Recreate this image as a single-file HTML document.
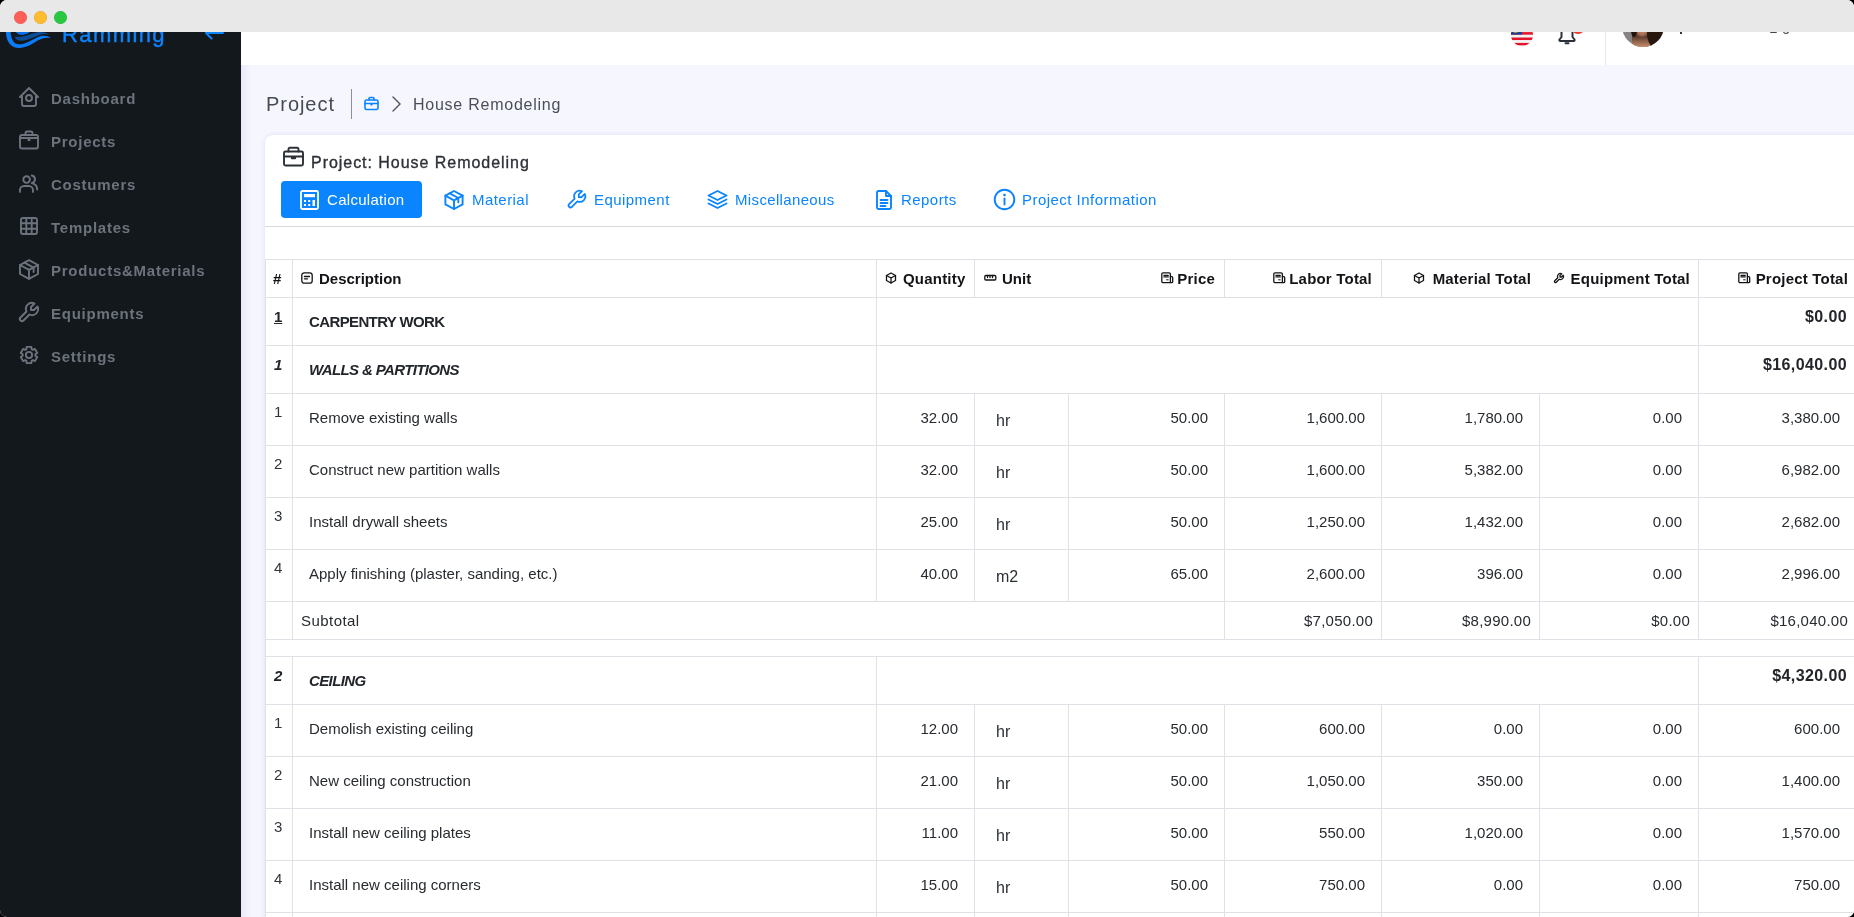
<!DOCTYPE html>
<html><head><meta charset="utf-8">
<style>
*{box-sizing:border-box;margin:0;padding:0}
html,body{width:1854px;height:917px;overflow:hidden;background:#000;font-family:"Liberation Sans",sans-serif}
#win{position:absolute;left:0;top:0;width:1854px;height:917px;border-radius:7px;overflow:hidden;background:#f6f6fe}
#titlebar{position:absolute;left:0;top:0;width:1854px;height:32px;background:#e8e8e8}
.dot{position:absolute;top:10.6px;width:13px;height:13px;border-radius:50%;box-shadow:inset 0 0 0 0.6px rgba(0,0,0,0.12)}
#side{position:absolute;left:0;top:32px;width:241px;height:885px;background:#13181c;overflow:hidden}
#topbar{position:absolute;left:241px;top:32px;width:1613px;height:33px;background:#fff}
.ic{position:absolute;overflow:visible}
.t{position:absolute;white-space:nowrap;line-height:1}
#win{will-change:transform}
.nv{position:absolute;left:51px;font-size:15px;font-weight:bold;color:#6c737d;letter-spacing:0.75px;line-height:1}
.hl{position:absolute;height:1px;background:#dfe1e6}
.vl{position:absolute;width:1px;background:#dfe1e6}
.num{font-size:15px;color:#3a3f45}
.th{font-size:15px;font-weight:bold;color:#121417}
.tab{font-size:15px;color:#0a84ff;letter-spacing:0.4px}
</style></head>
<body>
<div id="win">
 <div id="titlebar">
  <div class="dot" style="left:13.8px;background:#ff5f57"></div>
  <div class="dot" style="left:33.8px;background:#febc2e"></div>
  <div class="dot" style="left:53.8px;background:#28c840"></div>
 </div>

<div id="side">
<svg class="ic" style="left:0;top:-32px;width:60px;height:60px" viewBox="0 0 60 60"><path d="M5.8 30 C5.8 42 11 47.9 19 47.9 C27 47.9 33 43.3 38 40.3 C43 37.7 47 37.4 51 37.9 C47 35.3 42 35.2 37 37.5 C31 40.5 25 44.3 19 44.3 C13.5 44.3 10.6 39 10.6 30 Z" fill="#0b7cf7"/><path d="M15 30.5 C17 35.5 23 36.3 29 32.8 L30 30.5 Z" fill="#0a6fe8"/><path d="M14.8 36.8 C15.5 40.5 21 41.8 27 39.8 C33 37.8 38 35.2 42 34.2 C45 33.6 47.5 34 49.5 35.2 C46 32.3 41 31.3 36 32.5 C30 34 25 36.8 20 36.8 C17.5 36.8 16 36.6 14.8 36.8Z" fill="#0a4d96"/></svg>
<div class="t" style="left:62px;top:-8px;font-size:22px;color:#0a84ff;letter-spacing:1.4px;-webkit-text-stroke:0.4px #0a84ff">Ramming</div>
<svg class="ic" style="left:204px;top:-4px;width:22px;height:14px" viewBox="0 0 22 14" stroke="#0a84ff" stroke-width="2" fill="none" stroke-linecap="round" stroke-linejoin="round"><path d="M2 5H19M2 5L7.5 0M2 5L7.5 10.5"/></svg>
<svg class="ic" style="left:17px;top:53px;width:24px;height:24px" viewBox="0 0 24 24" fill="none" stroke="#6c737d" stroke-width="1.9" stroke-linecap="round" stroke-linejoin="round"><path d="M5 12H3l9-9 9 9h-2"/><path d="M5 12v7a2 2 0 0 0 2 2h10a2 2 0 0 0 2-2v-7"/><circle cx="12" cy="13" r="3"/></svg>
<div class="nv" style="top:59px">Dashboard</div>
<svg class="ic" style="left:17px;top:96px;width:24px;height:24px" viewBox="0 0 24 24" fill="none" stroke="#6c737d" stroke-width="1.9" stroke-linecap="round" stroke-linejoin="round"><rect x="3" y="7" width="18" height="13.5" rx="2"/><path d="M8.5 7V5a1.5 1.5 0 0 1 1.5-1.5h4A1.5 1.5 0 0 1 15.5 5v2"/><path d="M3 10h18"/><rect x="10.6" y="10.5" width="2.8" height="2.6" fill="#6c737d" stroke="none"/></svg>
<div class="nv" style="top:102px">Projects</div>
<svg class="ic" style="left:17px;top:139px;width:24px;height:24px" viewBox="0 0 24 24" fill="none" stroke="#6c737d" stroke-width="1.9" stroke-linecap="round" stroke-linejoin="round"><circle cx="9.6" cy="8.6" r="3.3"/><path d="M2.9 20.9v-1.7a4.2 4.2 0 0 1 4.2-4.2h4.7a4.2 4.2 0 0 1 4.2 4.2v1.7"/><path d="M14.7 4.5a3.9 3.9 0 0 1 0 7.7c3.2 .8 5.5 3.2 5.5 6.4"/></svg>
<div class="nv" style="top:145px">Costumers</div>
<svg class="ic" style="left:17px;top:182px;width:24px;height:24px" viewBox="0 0 24 24" fill="none" stroke="#6c737d" stroke-width="1.9" stroke-linecap="round" stroke-linejoin="round"><rect x="4" y="4" width="16" height="16" rx="2"/><path d="M4 9.3h16M4 14.7h16M9.3 4v16M14.7 4v16"/></svg>
<div class="nv" style="top:188px">Templates</div>
<svg class="ic" style="left:17px;top:225px;width:24px;height:24px" viewBox="0 0 24 24" fill="none" stroke="#6c737d" stroke-width="1.9" stroke-linecap="round" stroke-linejoin="round"><path d="M12 3.2l9 4.8v9L12 21.8 3 17V8z"/><path d="M3 8l9 4.9 9-4.9M12 12.9v8.9"/><path d="M7.4 5.6l9.2 5v4.4"/></svg>
<div class="nv" style="top:231px">Products&amp;Materials</div>
<svg class="ic" style="left:17px;top:268px;width:24px;height:24px" viewBox="0 0 24 24" fill="none" stroke="#6c737d" stroke-width="1.9" stroke-linecap="round" stroke-linejoin="round"><g transform="translate(24 0) scale(-1 1)"><path d="M7 10h3v-3l-3.5-3.5a6 6 0 0 1 8 8l6 6a2 2 0 0 1-3 3l-6-6a6 6 0 0 1-8-8l3.5 3.5"/></g></svg>
<div class="nv" style="top:274px">Equipments</div>
<svg class="ic" style="left:17px;top:311px;width:24px;height:24px" viewBox="0 0 24 24" fill="none" stroke="#6c737d" stroke-width="1.9" stroke-linecap="round" stroke-linejoin="round"><path d="M9.40 6.15 L9.66 3.83 L14.34 3.83 L14.60 6.15 L15.76 6.82 L17.90 5.89 L20.25 9.94 L18.36 11.33 L18.36 12.67 L20.25 14.06 L17.90 18.11 L15.76 17.18 L14.60 17.85 L14.34 20.17 L9.66 20.17 L9.40 17.85 L8.24 17.18 L6.10 18.11 L3.75 14.06 L5.64 12.67 L5.64 11.33 L3.75 9.94 L6.10 5.89 L8.24 6.82Z"/><circle cx="12" cy="12" r="3.1"/></svg>
<div class="nv" style="top:317px">Settings</div>
</div>
<div style="position:absolute;left:241px;top:32px;width:10px;height:885px;background:linear-gradient(90deg,rgba(120,110,220,0.10),rgba(120,110,220,0))"></div>
<div id="topbar"></div>
<svg class="ic" style="left:1511px;top:24px;width:22px;height:22px" viewBox="0 0 22 22"><defs><clipPath id="fc"><circle cx="11" cy="11" r="11"/></clipPath></defs><g clip-path="url(#fc)"><rect x="0" y="0.00" width="22" height="2.75" fill="#f2f2f2"/><rect x="0" y="2.70" width="22" height="2.75" fill="#e3152b"/><rect x="0" y="5.40" width="22" height="2.75" fill="#f2f2f2"/><rect x="0" y="8.10" width="22" height="2.75" fill="#e3152b"/><rect x="0" y="10.80" width="22" height="2.75" fill="#f2f2f2"/><rect x="0" y="13.50" width="22" height="2.75" fill="#e3152b"/><rect x="0" y="16.20" width="22" height="2.75" fill="#f2f2f2"/><rect x="0" y="18.90" width="22" height="2.75" fill="#e3152b"/><rect x="0" y="21.60" width="22" height="2.75" fill="#f2f2f2"/><rect x="0" y="0" width="11" height="10.6" fill="#1d3e9a"/><circle cx="5" cy="6" r="3" fill="#f6c915"/><circle cx="6" cy="6" r="2.6" fill="#1d3e9a"/></g></svg>
<svg class="ic" style="left:1556px;top:20px;width:22px;height:26px" viewBox="0 0 22 26" fill="none" stroke="#2b3036" stroke-width="2" stroke-linecap="round" stroke-linejoin="round"><path d="M5.5 11v6L3.5 19.5a1 1 0 0 0 .8 1.5h13.4a1 1 0 0 0 .8-1.5L16.5 17v-6a5.5 5.5 0 0 0-11 0z"/><path d="M9.5 23.2h3"/></svg>
<div style="position:absolute;left:1571px;top:20px;width:14px;height:14px;border-radius:50%;background:#f23b2c"></div>
<div class="vl" style="left:1605px;top:32px;height:33px;background:#e6e6ea"></div>
<div style="position:absolute;left:1622px;top:5px;width:42px;height:42px;border-radius:50%;overflow:hidden;background:#858483"><div style="position:absolute;left:10px;top:22px;width:20px;height:22px;background:linear-gradient(180deg,#3a271d 0,#5e3f2f 45%,#b07a5c 80%,#d79c7e 100%);border-radius:30% 30% 0 0"></div><div style="position:absolute;left:13px;top:18px;width:14px;height:14px;background:radial-gradient(ellipse at 50% 45%,#d19478 0,#a86f52 50%,#2a1a12 100%);border-radius:50%"></div><div style="position:absolute;left:25px;top:16px;width:22px;height:30px;background:#26180f;border-radius:40% 20% 20% 60%"></div><div style="position:absolute;left:9px;top:18px;width:6px;height:14px;background:#1f140e;border-radius:50%"></div></div>
<div style="position:absolute;left:1680px;top:31px;width:2px;height:3px;background:#333"></div>
<div style="position:absolute;left:1770px;top:31px;width:7px;height:2px;background:#444;border-radius:1px"></div>
<div style="position:absolute;left:1783px;top:29px;width:6px;height:5px;border:1.5px solid #444;border-top:none;border-radius:0 0 3px 3px"></div>
<div style="position:absolute;left:1400px;top:0;width:454px;height:32px;background:#e8e8e8;border-radius:0 7px 0 0"></div>
<div style="position:absolute;left:0;top:0;width:241px;height:32px;background:#e8e8e8;border-radius:7px 0 0 0"></div>
<div class="dot" style="left:13.8px;background:#ff5f57"></div>
  <div class="dot" style="left:33.8px;background:#febc2e"></div>
  <div class="dot" style="left:53.8px;background:#28c840"></div>
<div class="t" style="left:266px;top:94px;font-size:20px;color:#464b52;letter-spacing:0.95px">Project</div>
<div class="vl" style="left:351px;top:89px;height:30px;background:#8d9196"></div>
<svg class="ic" style="left:364px;top:96px;width:15px;height:15px" viewBox="0 0 15 15" fill="none" stroke="#0a84ff" stroke-width="1.6" stroke-linecap="round" stroke-linejoin="round"><rect x="1" y="4" width="13" height="9.5" rx="1.5"/><path d="M5 4V2.5a1 1 0 0 1 1-1h3a1 1 0 0 1 1 1V4"/><path d="M1 7.5h13"/><path d="M7 8.8h1"/></svg>
<svg class="ic" style="left:390px;top:95px;width:12px;height:18px" viewBox="0 0 12 18" fill="none" stroke="#4f545a" stroke-width="1.4" stroke-linecap="round"><path d="M3 2l7 7-7 7"/></svg>
<div class="t" style="left:413px;top:97px;font-size:16px;color:#4a4f56;letter-spacing:0.75px">House Remodeling</div>
<div style="position:absolute;left:265px;top:135px;width:1620px;height:800px;background:#fff;border-radius:8px 0 0 0;box-shadow:0 0 4px rgba(95,85,235,0.16)"></div>
<svg class="ic" style="left:282px;top:146px;width:23px;height:22px" viewBox="0 0 23 22" fill="none" stroke="#2b3036" stroke-width="1.9" stroke-linecap="round" stroke-linejoin="round"><rect x="2" y="5.5" width="19" height="14" rx="1.5"/><path d="M6.5 5.5V3a1.3 1.3 0 0 1 1.3-1.3h7.4A1.3 1.3 0 0 1 16.5 3v2.5"/><path d="M2 10.5h19"/><path d="M10 12h3" stroke-width="2.4"/></svg>
<div class="t" style="left:311px;top:155px;font-size:16px;color:#2d3238;letter-spacing:0.96px;-webkit-text-stroke:0.35px #2d3238">Project: House Remodeling</div>
<div style="position:absolute;left:281px;top:181px;width:141px;height:37px;background:#0a84ff;border-radius:4px"></div>
<svg class="ic" style="left:300px;top:190px;width:19px;height:20px" viewBox="0 0 19 20" fill="none" stroke="#fff" stroke-width="1.8"><rect x="1" y="1" width="17" height="18" rx="1.5"/><rect x="4" y="4" width="11" height="3.2" fill="#fff" stroke="none"/><rect x="4" y="10" width="2" height="2" fill="#fff" stroke="none"/><rect x="8.2" y="10" width="2" height="2" fill="#fff" stroke="none"/><rect x="4" y="14" width="2" height="2" fill="#fff" stroke="none"/><rect x="8.2" y="14" width="2" height="2" fill="#fff" stroke="none"/><rect x="12.5" y="10" width="2.5" height="6" fill="#fff" stroke="none"/></svg>
<div class="t" style="left:327px;top:192px;font-size:15px;color:#fff;letter-spacing:0.3px">Calculation</div>
<svg class="ic" style="left:443px;top:189px;width:22px;height:22px" viewBox="0 0 22 22" fill="none" stroke="#0a84ff" stroke-width="1.9" stroke-linecap="round" stroke-linejoin="round"><path d="M11 2l8.6 4.6v8.8L11 20l-8.6-4.6V6.6z"/><path d="M2.4 6.6l8.6 4.7 8.6-4.7M11 11.3V20"/><path d="M6.7 4.3l8.6 4.7v4.2"/></svg>
<div class="t" style="left:472px;top:192px;font-size:15px;color:#0a84ff;letter-spacing:0.45px">Material</div>
<svg class="ic" style="left:566px;top:188px;width:22px;height:23px" viewBox="0 0 22 23" fill="none" stroke="#0a84ff" stroke-width="1.9" stroke-linecap="round" stroke-linejoin="round"><g transform="translate(22 0) scale(-1 1) scale(.92)"><path d="M7 10h3v-3l-3.5-3.5a6 6 0 0 1 8 8l6 6a2 2 0 0 1-3 3l-6-6a6 6 0 0 1-8-8l3.5 3.5"/></g></svg>
<div class="t" style="left:594px;top:192px;font-size:15px;color:#0a84ff;letter-spacing:0.45px">Equipment</div>
<svg class="ic" style="left:706px;top:189px;width:23px;height:22px" viewBox="0 0 23 22" fill="none" stroke="#0a84ff" stroke-width="1.9" stroke-linecap="round" stroke-linejoin="round"><path d="M11.5 2l9 4.5-9 4.5-9-4.5z"/><path d="M2.5 10.5l9 4.5 9-4.5"/><path d="M2.5 14.5l9 4.5 9-4.5"/></svg>
<div class="t" style="left:735px;top:192px;font-size:15px;color:#0a84ff;letter-spacing:0.35px">Miscellaneous</div>
<svg class="ic" style="left:874px;top:189px;width:20px;height:22px" viewBox="0 0 20 22" fill="none" stroke="#0a84ff" stroke-width="1.9" stroke-linecap="round" stroke-linejoin="round"><path d="M12 2H4.5A1.5 1.5 0 0 0 3 3.5v15A1.5 1.5 0 0 0 4.5 20h11a1.5 1.5 0 0 0 1.5-1.5V7z"/><path d="M12 2v5h5"/><path d="M6.5 11h7M6.5 14h7M6.5 17h5"/></svg>
<div class="t" style="left:901px;top:192px;font-size:15px;color:#0a84ff;letter-spacing:0.45px">Reports</div>
<svg class="ic" style="left:993px;top:188px;width:23px;height:23px" viewBox="0 0 23 23" fill="none" stroke="#0a84ff" stroke-width="1.9" stroke-linecap="round" stroke-linejoin="round"><circle cx="11.5" cy="11.5" r="9.8"/><path d="M11.5 10.5v6"/><path d="M11.5 7h.01" stroke-width="2.6"/></svg>
<div class="t" style="left:1022px;top:192px;font-size:15px;color:#0a84ff;letter-spacing:0.47px">Project Information</div>
<div class="hl" style="left:265px;top:226px;width:1589px;background:#d9d9dd"></div>
<div class="hl" style="left:265px;top:259px;width:1589px"></div>
<div class="hl" style="left:265px;top:297px;width:1589px"></div>
<div class="hl" style="left:265px;top:345px;width:1589px"></div>
<div class="hl" style="left:265px;top:393px;width:1589px"></div>
<div class="hl" style="left:265px;top:445px;width:1589px"></div>
<div class="hl" style="left:265px;top:497px;width:1589px"></div>
<div class="hl" style="left:265px;top:549px;width:1589px"></div>
<div class="hl" style="left:265px;top:601px;width:1589px"></div>
<div class="hl" style="left:265px;top:639px;width:1589px"></div>
<div class="hl" style="left:265px;top:656px;width:1589px"></div>
<div class="hl" style="left:265px;top:704px;width:1589px"></div>
<div class="hl" style="left:265px;top:756px;width:1589px"></div>
<div class="hl" style="left:265px;top:808px;width:1589px"></div>
<div class="hl" style="left:265px;top:860px;width:1589px"></div>
<div class="hl" style="left:265px;top:912px;width:1589px"></div>
<div class="vl" style="left:265px;top:259px;height:658px"></div>
<div class="vl" style="left:292px;top:259px;height:38px"></div>
<div class="vl" style="left:876px;top:259px;height:38px"></div>
<div class="vl" style="left:974px;top:259px;height:38px"></div>
<div class="vl" style="left:1224px;top:259px;height:38px"></div>
<div class="vl" style="left:1381px;top:259px;height:38px"></div>
<div class="vl" style="left:1698px;top:259px;height:38px"></div>
<div class="vl" style="left:292px;top:297px;height:48px"></div>
<div class="vl" style="left:876px;top:297px;height:48px"></div>
<div class="vl" style="left:1698px;top:297px;height:48px"></div>
<div class="vl" style="left:292px;top:345px;height:48px"></div>
<div class="vl" style="left:876px;top:345px;height:48px"></div>
<div class="vl" style="left:1698px;top:345px;height:48px"></div>
<div class="vl" style="left:292px;top:656px;height:48px"></div>
<div class="vl" style="left:876px;top:656px;height:48px"></div>
<div class="vl" style="left:1698px;top:656px;height:48px"></div>
<div class="vl" style="left:292px;top:393px;height:208px"></div>
<div class="vl" style="left:876px;top:393px;height:208px"></div>
<div class="vl" style="left:974px;top:393px;height:208px"></div>
<div class="vl" style="left:1068px;top:393px;height:208px"></div>
<div class="vl" style="left:1224px;top:393px;height:208px"></div>
<div class="vl" style="left:1381px;top:393px;height:208px"></div>
<div class="vl" style="left:1539px;top:393px;height:208px"></div>
<div class="vl" style="left:1698px;top:393px;height:208px"></div>
<div class="vl" style="left:292px;top:704px;height:213px"></div>
<div class="vl" style="left:876px;top:704px;height:213px"></div>
<div class="vl" style="left:974px;top:704px;height:213px"></div>
<div class="vl" style="left:1068px;top:704px;height:213px"></div>
<div class="vl" style="left:1224px;top:704px;height:213px"></div>
<div class="vl" style="left:1381px;top:704px;height:213px"></div>
<div class="vl" style="left:1539px;top:704px;height:213px"></div>
<div class="vl" style="left:1698px;top:704px;height:213px"></div>
<div class="vl" style="left:292px;top:601px;height:38px"></div>
<div class="vl" style="left:1224px;top:601px;height:38px"></div>
<div class="vl" style="left:1381px;top:601px;height:38px"></div>
<div class="vl" style="left:1539px;top:601px;height:38px"></div>
<div class="vl" style="left:1698px;top:601px;height:38px"></div>
<div class="t" style="left:273px;top:271px;font-size:15px;font-weight:bold;color:#121417">#</div>
<svg class="ic" style="left:301px;top:272px;width:12px;height:12px" viewBox="0 0 12 12" fill="none" stroke="#121417" stroke-width="1.3" stroke-linecap="round" stroke-linejoin="round"><rect x="0.8" y="0.8" width="10.4" height="10.4" rx="2.5"/><path d="M3.5 4.5h5M3.5 6.8h3"/></svg>
<div class="t" style="left:319px;top:271px;font-size:15px;font-weight:bold;color:#121417">Description</div>
<svg class="ic" style="left:885px;top:272px;width:12px;height:12px" viewBox="0 0 12 12" fill="none" stroke="#121417" stroke-width="1.3" stroke-linecap="round" stroke-linejoin="round"><path d="M6 1l4.5 2.5v5L6 11 1.5 8.5v-5z"/><path d="M6 6l4.5-2.5M6 6v5M6 6L1.5 3.5"/></svg>
<div class="t" style="left:903px;top:271px;font-size:15px;font-weight:bold;color:#121417;letter-spacing:0.2px">Quantity</div>
<svg class="ic" style="left:984px;top:272px;width:13px;height:12px" viewBox="0 0 13 12" fill="none" stroke="#121417" stroke-width="1.3" stroke-linecap="round" stroke-linejoin="round"><rect x="0.8" y="3.5" width="11" height="4.5" rx="1"/><path d="M3.5 3.5v2M6 3.5v2M8.5 3.5v2"/></svg>
<div class="t" style="left:1002px;top:271px;font-size:15px;font-weight:bold;color:#121417">Unit</div>
<svg class="ic" style="left:1161px;top:272px;width:13px;height:12px" viewBox="0 0 13 12" fill="none" stroke="#121417" stroke-width="1.3" stroke-linecap="round" stroke-linejoin="round"><rect x="0.8" y="0.9" width="8.6" height="9.8" rx="1.2"/><path d="M9.4 4.6h1.4a.9.9 0 0 1 .9.9v4.3a.9.9 0 0 1-.9.9H9.4"/><path d="M2.9 3.3h4.4M2.9 4.9h4.4" stroke-width="1.2"/><path d="M5.6 7.8h1.6" stroke-width="1"/></svg>
<div class="t" style="right:639px;top:271px;font-size:15px;font-weight:bold;color:#121417;letter-spacing:0.2px">Price</div>
<div class="t" style="right:482px;top:271px;font-size:15px;font-weight:bold;color:#121417;letter-spacing:0.2px">Labor Total</div>
<div class="t" style="right:323px;top:271px;font-size:15px;font-weight:bold;color:#121417;letter-spacing:0.2px">Material Total</div>
<div class="t" style="right:164px;top:271px;font-size:15px;font-weight:bold;color:#121417;letter-spacing:0.2px">Equipment Total</div>
<div class="t" style="right:6px;top:271px;font-size:15px;font-weight:bold;color:#121417;letter-spacing:0.2px">Project Total</div>
<svg class="ic" style="left:1273px;top:272px;width:13px;height:12px" viewBox="0 0 13 12" fill="none" stroke="#121417" stroke-width="1.3" stroke-linecap="round" stroke-linejoin="round"><rect x="0.8" y="0.9" width="8.6" height="9.8" rx="1.2"/><path d="M9.4 4.6h1.4a.9.9 0 0 1 .9.9v4.3a.9.9 0 0 1-.9.9H9.4"/><path d="M2.9 3.3h4.4M2.9 4.9h4.4" stroke-width="1.2"/><path d="M5.6 7.8h1.6" stroke-width="1"/></svg>
<svg class="ic" style="left:1413px;top:272px;width:12px;height:12px" viewBox="0 0 12 12" fill="none" stroke="#121417" stroke-width="1.3" stroke-linecap="round" stroke-linejoin="round"><path d="M6 1l4.5 2.5v5L6 11 1.5 8.5v-5z"/><path d="M6 6l4.5-2.5M6 6v5M6 6L1.5 3.5"/></svg>
<svg class="ic" style="left:1553px;top:272px;width:12px;height:12px" viewBox="0 0 12 12" fill="none" stroke="#121417" stroke-width="1.3" stroke-linecap="round" stroke-linejoin="round"><g transform="translate(12 0) scale(-1 1) scale(.5)"><path d="M7 10h3v-3l-3.5-3.5a6 6 0 0 1 8 8l6 6a2 2 0 0 1-3 3l-6-6a6 6 0 0 1-8-8l3.5 3.5" stroke-width="2.6"/></g></svg>
<svg class="ic" style="left:1738px;top:272px;width:13px;height:12px" viewBox="0 0 13 12" fill="none" stroke="#121417" stroke-width="1.3" stroke-linecap="round" stroke-linejoin="round"><rect x="0.8" y="0.9" width="8.6" height="9.8" rx="1.2"/><path d="M9.4 4.6h1.4a.9.9 0 0 1 .9.9v4.3a.9.9 0 0 1-.9.9H9.4"/><path d="M2.9 3.3h4.4M2.9 4.9h4.4" stroke-width="1.2"/><path d="M5.6 7.8h1.6" stroke-width="1"/></svg>
<div class="t" style="left:274px;top:309px;font-size:15px;font-weight:bold;color:#22262b;text-decoration:underline;">1</div>
<div class="t" style="left:309px;top:314px;font-size:15px;font-weight:bold;color:#22262b;letter-spacing:-0.62px;">CARPENTRY WORK</div>
<div class="t" style="right:7px;top:309px;font-size:16px;font-weight:bold;color:#22262b;letter-spacing:0.4px">$0.00</div>
<div class="t" style="left:274px;top:357px;font-size:15px;font-weight:bold;color:#22262b;font-style:italic;">1</div>
<div class="t" style="left:309px;top:362px;font-size:15px;font-weight:bold;color:#22262b;letter-spacing:-0.62px;font-style:italic;">WALLS &amp; PARTITIONS</div>
<div class="t" style="right:7px;top:357px;font-size:16px;font-weight:bold;color:#22262b;letter-spacing:0.4px">$16,040.00</div>
<div class="t" style="left:274px;top:668px;font-size:15px;font-weight:bold;color:#22262b;font-style:italic;">2</div>
<div class="t" style="left:309px;top:673px;font-size:15px;font-weight:bold;color:#22262b;letter-spacing:-0.62px;font-style:italic;">CEILING</div>
<div class="t" style="right:7px;top:668px;font-size:16px;font-weight:bold;color:#22262b;letter-spacing:0.4px">$4,320.00</div>
<div class="t" style="left:274px;top:404px;font-size:15px;color:#30353a">1</div>
<div class="t" style="left:309px;top:410px;font-size:15px;color:#272b30">Remove existing walls</div>
<div class="t" style="right:896px;top:410px;font-size:15px;color:#272b30">32.00</div>
<div class="t" style="left:996px;top:413px;font-size:16px;color:#2b3035">hr</div>
<div class="t" style="right:646px;top:410px;font-size:15px;color:#272b30">50.00</div>
<div class="t" style="right:489px;top:410px;font-size:15px;color:#272b30">1,600.00</div>
<div class="t" style="right:331px;top:410px;font-size:15px;color:#272b30">1,780.00</div>
<div class="t" style="right:172px;top:410px;font-size:15px;color:#272b30">0.00</div>
<div class="t" style="right:14px;top:410px;font-size:15px;color:#272b30">3,380.00</div>
<div class="t" style="left:274px;top:456px;font-size:15px;color:#30353a">2</div>
<div class="t" style="left:309px;top:462px;font-size:15px;color:#272b30">Construct new partition walls</div>
<div class="t" style="right:896px;top:462px;font-size:15px;color:#272b30">32.00</div>
<div class="t" style="left:996px;top:465px;font-size:16px;color:#2b3035">hr</div>
<div class="t" style="right:646px;top:462px;font-size:15px;color:#272b30">50.00</div>
<div class="t" style="right:489px;top:462px;font-size:15px;color:#272b30">1,600.00</div>
<div class="t" style="right:331px;top:462px;font-size:15px;color:#272b30">5,382.00</div>
<div class="t" style="right:172px;top:462px;font-size:15px;color:#272b30">0.00</div>
<div class="t" style="right:14px;top:462px;font-size:15px;color:#272b30">6,982.00</div>
<div class="t" style="left:274px;top:508px;font-size:15px;color:#30353a">3</div>
<div class="t" style="left:309px;top:514px;font-size:15px;color:#272b30">Install drywall sheets</div>
<div class="t" style="right:896px;top:514px;font-size:15px;color:#272b30">25.00</div>
<div class="t" style="left:996px;top:517px;font-size:16px;color:#2b3035">hr</div>
<div class="t" style="right:646px;top:514px;font-size:15px;color:#272b30">50.00</div>
<div class="t" style="right:489px;top:514px;font-size:15px;color:#272b30">1,250.00</div>
<div class="t" style="right:331px;top:514px;font-size:15px;color:#272b30">1,432.00</div>
<div class="t" style="right:172px;top:514px;font-size:15px;color:#272b30">0.00</div>
<div class="t" style="right:14px;top:514px;font-size:15px;color:#272b30">2,682.00</div>
<div class="t" style="left:274px;top:560px;font-size:15px;color:#30353a">4</div>
<div class="t" style="left:309px;top:566px;font-size:15px;color:#272b30">Apply finishing (plaster, sanding, etc.)</div>
<div class="t" style="right:896px;top:566px;font-size:15px;color:#272b30">40.00</div>
<div class="t" style="left:996px;top:569px;font-size:16px;color:#2b3035">m2</div>
<div class="t" style="right:646px;top:566px;font-size:15px;color:#272b30">65.00</div>
<div class="t" style="right:489px;top:566px;font-size:15px;color:#272b30">2,600.00</div>
<div class="t" style="right:331px;top:566px;font-size:15px;color:#272b30">396.00</div>
<div class="t" style="right:172px;top:566px;font-size:15px;color:#272b30">0.00</div>
<div class="t" style="right:14px;top:566px;font-size:15px;color:#272b30">2,996.00</div>
<div class="t" style="left:301px;top:613px;font-size:15px;color:#272b30;letter-spacing:0.45px">Subtotal</div>
<div class="t" style="right:481px;top:613px;font-size:15px;color:#272b30;letter-spacing:0.25px">$7,050.00</div>
<div class="t" style="right:323px;top:613px;font-size:15px;color:#272b30;letter-spacing:0.25px">$8,990.00</div>
<div class="t" style="right:164px;top:613px;font-size:15px;color:#272b30;letter-spacing:0.25px">$0.00</div>
<div class="t" style="right:6px;top:613px;font-size:15px;color:#272b30;letter-spacing:0.25px">$16,040.00</div>
<div class="t" style="left:274px;top:715px;font-size:15px;color:#30353a">1</div>
<div class="t" style="left:309px;top:721px;font-size:15px;color:#272b30">Demolish existing ceiling</div>
<div class="t" style="right:896px;top:721px;font-size:15px;color:#272b30">12.00</div>
<div class="t" style="left:996px;top:724px;font-size:16px;color:#2b3035">hr</div>
<div class="t" style="right:646px;top:721px;font-size:15px;color:#272b30">50.00</div>
<div class="t" style="right:489px;top:721px;font-size:15px;color:#272b30">600.00</div>
<div class="t" style="right:331px;top:721px;font-size:15px;color:#272b30">0.00</div>
<div class="t" style="right:172px;top:721px;font-size:15px;color:#272b30">0.00</div>
<div class="t" style="right:14px;top:721px;font-size:15px;color:#272b30">600.00</div>
<div class="t" style="left:274px;top:767px;font-size:15px;color:#30353a">2</div>
<div class="t" style="left:309px;top:773px;font-size:15px;color:#272b30">New ceiling construction</div>
<div class="t" style="right:896px;top:773px;font-size:15px;color:#272b30">21.00</div>
<div class="t" style="left:996px;top:776px;font-size:16px;color:#2b3035">hr</div>
<div class="t" style="right:646px;top:773px;font-size:15px;color:#272b30">50.00</div>
<div class="t" style="right:489px;top:773px;font-size:15px;color:#272b30">1,050.00</div>
<div class="t" style="right:331px;top:773px;font-size:15px;color:#272b30">350.00</div>
<div class="t" style="right:172px;top:773px;font-size:15px;color:#272b30">0.00</div>
<div class="t" style="right:14px;top:773px;font-size:15px;color:#272b30">1,400.00</div>
<div class="t" style="left:274px;top:819px;font-size:15px;color:#30353a">3</div>
<div class="t" style="left:309px;top:825px;font-size:15px;color:#272b30">Install new ceiling plates</div>
<div class="t" style="right:896px;top:825px;font-size:15px;color:#272b30">11.00</div>
<div class="t" style="left:996px;top:828px;font-size:16px;color:#2b3035">hr</div>
<div class="t" style="right:646px;top:825px;font-size:15px;color:#272b30">50.00</div>
<div class="t" style="right:489px;top:825px;font-size:15px;color:#272b30">550.00</div>
<div class="t" style="right:331px;top:825px;font-size:15px;color:#272b30">1,020.00</div>
<div class="t" style="right:172px;top:825px;font-size:15px;color:#272b30">0.00</div>
<div class="t" style="right:14px;top:825px;font-size:15px;color:#272b30">1,570.00</div>
<div class="t" style="left:274px;top:871px;font-size:15px;color:#30353a">4</div>
<div class="t" style="left:309px;top:877px;font-size:15px;color:#272b30">Install new ceiling corners</div>
<div class="t" style="right:896px;top:877px;font-size:15px;color:#272b30">15.00</div>
<div class="t" style="left:996px;top:880px;font-size:16px;color:#2b3035">hr</div>
<div class="t" style="right:646px;top:877px;font-size:15px;color:#272b30">50.00</div>
<div class="t" style="right:489px;top:877px;font-size:15px;color:#272b30">750.00</div>
<div class="t" style="right:331px;top:877px;font-size:15px;color:#272b30">0.00</div>
<div class="t" style="right:172px;top:877px;font-size:15px;color:#272b30">0.00</div>
<div class="t" style="right:14px;top:877px;font-size:15px;color:#272b30">750.00</div>
</div></body></html>
